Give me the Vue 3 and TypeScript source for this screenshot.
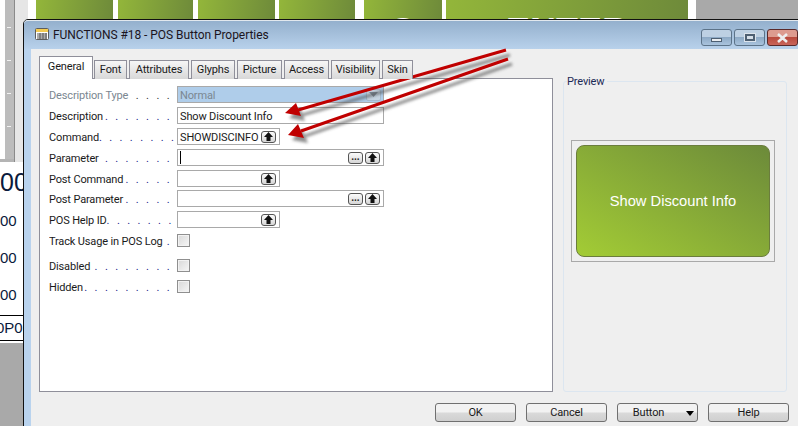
<template>
  <div class="screen">
    <div class="backdrop">
      <div class="side">
        <div class="ruler">
          <i v-for="n in 4" :key="n" class="tick"></i>
        </div>
        <div class="totals">
          <div class="big">00</div>
          <div v-for="n in 3" :key="n" class="small">00</div>
          <div class="code">0P0</div>
        </div>
      </div>
      <div class="keys">
        <div v-for="k in keys" :key="k.w" class="key" :class="k.cls" :style="{ width: k.w + 'px' }">{{ k.text }}</div>
      </div>
    </div>

    <div class="window">
      <div class="titlebar">
        <svg class="app-icon" width="14" height="12" viewBox="0 0 14 12">
          <rect x="0.5" y="0.5" width="13" height="11" rx="1" fill="#fff" stroke="#5d5d5d" />
          <rect x="1" y="1" width="12" height="3" fill="#f3cb52" />
          <path d="M2 6h10M2 8h10M2 10h10M5 5v6M8 5v6M11 5v6" stroke="#565656" stroke-width="1" />
        </svg>
        <span class="title">FUNCTIONS #18 - POS Button Properties</span>
        <div class="caption-btns">
          <div class="cap"><i class="min-glyph"></i></div>
          <div class="cap"><i class="max-glyph"></i></div>
          <div class="cap close">
            <svg width="13" height="10" viewBox="0 0 13 10">
              <path d="M2 1l9 8M11 1l-9 8" stroke="#eee" stroke-width="2.6" />
            </svg>
          </div>
        </div>
      </div>

      <div class="client">
        <div class="panes">
          <div class="tabset">
            <div class="tabs">
              <div v-for="(t, i) in tabs" :key="t.name" class="tab" :class="{ active: i === 0 }" :style="{ width: t.w + 'px' }">{{ t.name }}</div>
            </div>
            <div class="page">
              <div v-for="row in rows" :key="row.label" class="row" :class="{ dim: row.kind === 'select' }" :style="{ marginTop: row.gap + 'px' }">
                <span class="label"><span>{{ row.label }}</span><span class="dots">{{ '.'.repeat(row.dots) }}</span></span>
                <div v-if="row.kind === 'check'" class="check"></div>
                <div v-else class="field" :class="[row.kind, row.wide ? 'wide' : 'narrow']">
                  <span v-if="row.caret" class="caret"></span>
                  <span class="value">{{ row.value }}</span>
                  <span v-if="row.kind === 'select'" class="drop">
                    <svg width="9" height="5" viewBox="0 0 9 5"><path d="M0 0h9L4.500 5z" fill="#7f8b98" /></svg>
                  </span>
                  <span v-if="row.more" class="pick more">...</span>
                  <span v-if="row.up" class="pick">
                    <svg width="9" height="9" viewBox="0 0 9 9"><path d="M4.500 0L9 5H6.500v4h-4V5H0z" fill="#111" /></svg>
                  </span>
                </div>
              </div>
            </div>
          </div>

          <div class="preview">
            <span class="legend">Preview</span>
            <div class="frame">
              <div class="sample">Show Discount Info</div>
            </div>
          </div>
        </div>

        <div class="footer">
          <div class="btn">OK</div>
          <div class="btn">Cancel</div>
          <div class="btn menu">Button<i class="menu-arrow"></i></div>
          <div class="btn">Help</div>
        </div>
      </div>
    </div>

    <svg class="arrows" width="798" height="426" viewBox="0 0 798 426">
      <defs>
        <filter id="soft" x="-10%" y="-30%" width="120%" height="160%">
          <feGaussianBlur stdDeviation="1.6" />
        </filter>
      </defs>
      <g filter="url(#soft)" opacity="0.6" transform="translate(4 5)">
        <path d="M506 50L298 110M508 59L301 131" stroke="#444" stroke-width="3" fill="none" />
        <path d="M285 113L296 103L301 116z M288 135L298 124L304 138z" fill="#444" />
      </g>
      <path d="M506 50L298 110M508 59L301 131" stroke="#c00000" stroke-width="3" fill="none" />
      <path d="M285 113L296 103L301 116z M288 135L298 124L304 138z" fill="#c00000" />
    </svg>
  </div>
</template>

<script setup lang="ts">
type Row = {
  label: string
  dots: number
  kind: 'select' | 'text' | 'check'
  gap: number
  value?: string
  wide?: boolean
  up?: boolean
  more?: boolean
  caret?: boolean
}

const keys = [
  { w: 77, cls: '', text: '' },
  { w: 75, cls: 'focus', text: '' },
  { w: 77, cls: '', text: '' },
  { w: 76, cls: 'tight', text: '' },
  { w: 78, cls: 'gap', text: 'O' },
  { w: 242, cls: 'enter', text: 'ENTER' },
]

const tabs = [
  { name: 'General', w: 54 },
  { name: 'Font', w: 33 },
  { name: 'Attributes', w: 60 },
  { name: 'Glyphs', w: 44 },
  { name: 'Picture', w: 45 },
  { name: 'Access', w: 45 },
  { name: 'Visibility', w: 49 },
  { name: 'Skin', w: 31 },
]

const rows: Row[] = [
  { label: 'Description Type', dots: 4, kind: 'select', gap: 0, value: 'Normal', wide: true },
  { label: 'Description', dots: 7, kind: 'text', gap: 4, value: 'Show Discount Info', wide: true },
  { label: 'Command', dots: 8, kind: 'text', gap: 4, value: 'SHOWDISCINFO', up: true },
  { label: 'Parameter', dots: 7, kind: 'text', gap: 4, wide: true, up: true, more: true, caret: true },
  { label: 'Post Command', dots: 5, kind: 'text', gap: 4, up: true },
  { label: 'Post Parameter', dots: 5, kind: 'text', gap: 3, wide: true, up: true, more: true },
  { label: 'POS Help ID', dots: 7, kind: 'text', gap: 4, up: true },
  { label: 'Track Usage in POS Log', dots: 1, kind: 'check', gap: 4 },
  { label: 'Disabled', dots: 8, kind: 'check', gap: 8 },
  { label: 'Hidden', dots: 9, kind: 'check', gap: 4 },
]
</script>

<style scoped>
.screen {
  position: relative;
  width: 798px;
  height: 426px;
  overflow: hidden;
  background: #fff;
  font-family: Roboto, sans-serif;
  font-size: 11px;
  letter-spacing: -0.15px;
  color: #1a1a1a;
}

.backdrop {
  display: flex;
  height: 100%;
}

.side {
  width: 36px;
  flex: none;
  display: flex;
  flex-direction: column;
}

.ruler {
  height: 162px;
  flex: none;
  padding-top: 27px;
  box-sizing: border-box;
  background: linear-gradient(90deg, #fff 0 5px, #bcbcbc 5px 14px, #8a8a8a 14px 15px, #e6e6e6 15px 28px, #fff 28px);
  display: flex;
  flex-direction: column;
  gap: 32px;
  position: relative;
}

.ruler::after {
  content: "";
  position: absolute;
  left: 0;
  bottom: 0;
  width: 14px;
  height: 3px;
  background: #b4b4b4;
}

.tick {
  display: block;
  width: 4px;
  height: 1px;
  margin-left: 7px;
  background: #f2f2f2;
}

.totals {
  flex: 1;
  display: flex;
  flex-direction: column;
  font-family: "Liberation Sans", sans-serif;
  letter-spacing: 0;
  color: #0a1a3c;
  overflow: hidden;
  background: #fff;
}

.big {
  font-size: 25px;
  line-height: 26px;
  margin-top: 7px;
}

.small {
  font-size: 15px;
  line-height: 18px;
  margin-top: 19px;
}

.big + .small {
  margin-top: 17px;
}

.code {
  font-size: 15px;
  line-height: 24px;
  height: 24px;
  margin-top: 11px;
  border-top: 1px solid #000;
  border-bottom: 1px solid #000;
  text-indent: -4px;
  margin-bottom: 2px;
}

.totals::after {
  content: "";
  flex: 1;
  background: #a9a9a9;
}

.keys {
  flex: 1;
  display: flex;
  height: 20px;
  gap: 5px;
  background: linear-gradient(90deg, #fff 660px, #a9a9a9 660px);
}

.key {
  height: 20px;
  flex: none;
  background: linear-gradient(98deg, #93b63a, #6e8a3a);
  color: #fff;
  font-family: "Liberation Sans", sans-serif;
  font-size: 36px;
  font-weight: 700;
  letter-spacing: 0;
  line-height: 63px;
  text-align: center;
  overflow: hidden;
}

.key.focus {
  outline: 1px dotted #fff;
}

.key.tight {
  margin-left: -1px;
}

.key.gap {
  margin-left: 4px;
}

.key.enter {
  margin-left: -1px;
}

.window {
  position: absolute;
  left: 23px;
  top: 19px;
  width: 790px;
  height: 420px;
  border: 1px solid #111;
  border-radius: 5px 5px 0 0;
  background: #b9d3ee;
  display: flex;
  flex-direction: column;
}

.titlebar {
  height: 29px;
  flex: none;
  display: flex;
  align-items: center;
  padding-left: 11px;
  box-sizing: border-box;
  border-radius: 4px 4px 0 0;
  background: linear-gradient(180deg, #94b0cd, #b8d1eb);
  border-top: 1px solid #e2e8ee;
}

.app-icon {
  flex: none;
  margin-top: -2px;
}

.title {
  margin-left: 4px;
  font-size: 12px;
  color: #1b1420;
  letter-spacing: -0.05px;
  margin-top: -1px;
}

.caption-btns {
  position: absolute;
  left: 677px;
  top: 9px;
  display: flex;
  gap: 2px;
}

.cap {
  width: 31px;
  height: 17px;
  box-sizing: border-box;
  border: 1px solid #5c7389;
  border-radius: 3px;
  background: linear-gradient(180deg, #bdd0e3 0 45%, #8eaac6 50%, #a9c3dd);
  display: flex;
  align-items: center;
  justify-content: center;
}

.cap.close {
  border-color: #5a2a2a;
  background: linear-gradient(180deg, #dd9b8f 0 45%, #b94a3d 50%, #c9655a);
}

.min-glyph {
  width: 11px;
  height: 4px;
  margin-top: 5px;
  box-sizing: border-box;
  border: 1px solid #4d5f72;
  background: #e9edf1;
}

.max-glyph {
  width: 10px;
  height: 7px;
  box-sizing: border-box;
  border: 2px solid #4d5f72;
  background: #d5dfe9;
  outline: 1px solid #dbe3ec;
}

.client {
  margin-left: 7px;
  flex: 1;
  background: #efefef;
  padding: 8px 0 0 8px;
  display: flex;
  flex-direction: column;
}

.panes {
  display: flex;
  height: 335px;
  flex: none;
}

.tabset {
  width: 514px;
  flex: none;
  display: flex;
  flex-direction: column;
}

.tabs {
  display: flex;
  align-items: flex-end;
  height: 22px;
  gap: 2px;
  position: relative;
  z-index: 1;
  margin-bottom: -1px;
}

.tab {
  height: 19px;
  box-sizing: border-box;
  flex: none;
  border: 1px solid #8f8f9a;
  border-bottom: none;
  background: linear-gradient(180deg, #f6f6f6, #d8d8d8);
  text-align: center;
  line-height: 18px;
}

.tab.active {
  height: 23px;
  line-height: 20px;
  background: #fff;
  margin-right: -1px;
}

.page {
  flex: 1;
  box-sizing: border-box;
  border: 1px solid #8f8f9a;
  background: #fff;
  padding: 7px 0 0 9px;
}

.row {
  display: flex;
  align-items: center;
  height: 17px;
}

.label {
  width: 128px;
  flex: none;
  display: flex;
  justify-content: space-between;
  padding-top: 1px;
  white-space: pre;
  overflow: hidden;
}

.dots {
  color: #1c1c8c;
  letter-spacing: 7.400px;
}

.row.dim .label,
.row.dim .value {
  color: #7b8791;
}

.row.dim .dots {
  color: #333;
}

.field {
  box-sizing: border-box;
  height: 17px;
  border: 1px solid #a9a9a9;
  background: #fff;
  display: flex;
  align-items: center;
  padding: 0 2px;
  gap: 2px;
}

.field.wide {
  width: 207px;
}

.field.narrow {
  width: 103px;
}

.field.select {
  background: #afcdea;
}

.value {
  flex: 1;
  padding-top: 1px;
  white-space: nowrap;
}

.caret {
  width: 1px;
  height: 13px;
  background: #000;
}

.drop {
  width: 15px;
  height: 12px;
  border-radius: 2px;
  background: #c6d4e2;
  border: 1px solid #a6bbcf;
  box-sizing: border-box;
  display: flex;
  align-items: center;
  justify-content: center;
}

.pick {
  width: 15px;
  height: 12px;
  flex: none;
  box-sizing: border-box;
  border: 1px solid #555;
  border-radius: 3px;
  background: linear-gradient(180deg, #fbfbfb, #d6d6d6);
  display: flex;
  align-items: center;
  justify-content: center;
  margin-right: 1px;
}

.pick.more {
  margin-right: 0;
  font-weight: 700;
  font-size: 10px;
  line-height: 8px;
  align-items: flex-end;
  padding-bottom: 2px;
}

.check {
  width: 13px;
  height: 13px;
  box-sizing: border-box;
  border: 1px solid #8f8f8f;
  background: linear-gradient(135deg, #d8d8d8, #f6f6f6);
  box-shadow: inset 0 0 0 1px #f2f2f2;
}

.preview {
  position: relative;
  width: 224px;
  flex: none;
  margin: 24px 0 0 10px;
  box-sizing: border-box;
  border: 1px solid #dce6f0;
  border-radius: 3px;
  padding: 58px 0 0 7px;
}

.legend {
  position: absolute;
  left: 3px;
  top: -8px;
  padding: 0 3px 0 0;
  background: #efefef;
  line-height: 16px;
  color: #1b2a55;
}

.frame {
  width: 204px;
  height: 122px;
  box-sizing: border-box;
  border: 1px solid #a9a9a9;
  padding: 4px;
}

.sample {
  height: 100%;
  box-sizing: border-box;
  border: 1px solid #6b7d3d;
  border-radius: 8px;
  background: linear-gradient(to bottom left, #6c8a3a, #a3cc35);
  color: #fff;
  font-family: "Liberation Sans", sans-serif;
  font-size: 14.700px;
  letter-spacing: 0;
  display: flex;
  align-items: center;
  justify-content: center;
}

.footer {
  display: flex;
  gap: 10px;
  margin: 11px 0 0 396px;
}

.btn {
  width: 81px;
  height: 19px;
  box-sizing: border-box;
  border: 1px solid #707070;
  border-radius: 3px;
  background: linear-gradient(180deg, #f2f2f2 0 45%, #d9d9d9 55%, #cfcfcf);
  text-align: center;
  line-height: 18px;
  position: relative;
}

.btn.menu {
  padding-right: 18px;
}

.menu-arrow {
  position: absolute;
  right: 3px;
  top: 7px;
  border-style: solid;
  border-color: #000 transparent transparent;
  border-width: 5px 4.500px 0;
}

.arrows {
  position: absolute;
  left: 0;
  top: 0;
  pointer-events: none;
}
</style>
